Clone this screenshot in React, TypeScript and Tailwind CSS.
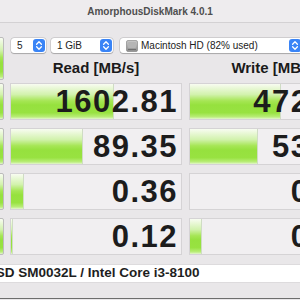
import React from 'react';

type Row = { read: string; readBar: number; write: string; writeBar: number };

const rows: Row[] = [
  { read: '1602.81', readBar: 103, write: '472.14', writeBar: 91 },
  { read: '89.35', readBar: 72, write: '53.86', writeBar: 68 },
  { read: '0.36', readBar: 13, write: '0.62', writeBar: 0 },
  { read: '0.12', readBar: 2, write: '0.53', writeBar: 12 },
];

const green =
  'bg-[linear-gradient(to_bottom,#f8fcf1_0%,#d2f2ad_30%,#a6e655_48%,#96e13e_60%,#98e241_82%,#b9ed78_94%,#e4f6cf_100%)]';

const Stepper = () => (
  <div className="w-[12px] h-[13px] rounded-[3px] bg-[#3a84f6] flex items-center justify-center shrink-0">
    <svg width="12" height="13" viewBox="0 0 12 13">
      <path d="M3.6 5.2 L6 2.8 L8.4 5.2" fill="none" stroke="white" strokeWidth="1.3" strokeLinecap="round" strokeLinejoin="round" />
      <path d="M3.6 7.8 L6 10.2 L8.4 7.8" fill="none" stroke="white" strokeWidth="1.3" strokeLinecap="round" strokeLinejoin="round" />
    </svg>
  </div>
);

const DiskIcon = () => (
  <svg width="12" height="12" viewBox="0 0 12 12" className="shrink-0">
    <defs>
      <linearGradient id="hd" x1="0" y1="0" x2="0" y2="1">
        <stop offset="0" stopColor="#c9c9c9" />
        <stop offset="1" stopColor="#8d8d8d" />
      </linearGradient>
    </defs>
    <rect x="0.5" y="0.5" width="11" height="11" rx="1.5" fill="url(#hd)" stroke="#7c7c7c" strokeWidth="0.6" />
    <rect x="2" y="2" width="8" height="6" rx="1" fill="#b5b5b5" />
    <rect x="2" y="9" width="8" height="1" fill="#6f6f6f" />
  </svg>
);

const Popup = ({ width, children }: { width: string; children: React.ReactNode }) => (
  <div
    className={`${width} h-[15px] bg-white rounded-[3px] shadow-[0_0_0_0.5px_rgba(0,0,0,0.18),0_0.5px_1px_rgba(0,0,0,0.2)] flex items-center justify-between pl-[6px] pr-[1px] shrink-0`}
  >
    <div className="flex items-center gap-[3px] text-[10px] text-[#222] leading-none">{children}</div>
    <Stepper />
  </div>
);

const Cell = ({ value, bar }: { value: string; bar: number }) => (
  <div className="relative w-[172px] h-[37px] border border-[#d5d3d5] bg-[#f1eff1] shrink-0">
    {bar > 0 && (
      <div className={`absolute left-0 top-0 bottom-0 ${green} border-r border-[#cfdcc4]`} style={{ width: bar }} />
    )}
    <div className="relative h-full flex items-center justify-end pr-[3px] text-[31px] font-bold tracking-[1.5px] text-[#1c1c1c] leading-none">
      {value}
    </div>
  </div>
);

export default function App() {
  return (
    <div className="w-[300px] h-[300px] overflow-hidden bg-[#e9e7e9] flex flex-col font-['Liberation_Sans',Arial,sans-serif]">
      {/* title bar */}
      <div className="h-[23px] shrink-0 bg-[#eeecee] border-b border-[#d3d1d3] flex items-center justify-center text-[10px] font-bold text-[#4f4f4f]">
        AmorphousDiskMark 4.0.1
      </div>

      <div className="flex pt-[14px] shrink-0">
        {/* left buttons, mostly off screen */}
        <div className="-ml-[50px] w-[54px] shrink-0 flex flex-col">
          <div className={`h-[43px] border border-[#bcbcbc] rounded-[2px] ${green}`} />
          <div className="mt-[3px] flex flex-col gap-[8px]">
            {rows.map((_, i) => (
              <div key={i} className={`h-[37px] border border-[#bcbcbc] rounded-[2px] ${green}`} />
            ))}
          </div>
        </div>

        <div className="ml-[6px] shrink-0 flex flex-col">
          <div className="mt-[1px] pl-[1px] flex">
            <Popup width="w-[35px]">5</Popup>
            <div className="ml-[5px]">
              <Popup width="w-[62px]">1 GiB</Popup>
            </div>
            <div className="ml-[7px]">
              <Popup width="w-[182px]">
                <DiskIcon />
                <span>Macintosh HD (82% used)</span>
              </Popup>
            </div>
          </div>

          <div className="h-[30px] grid grid-cols-[172px_172px] gap-x-[7px] items-center text-[15px] font-bold text-[#1a1a1a]">
            <div className="text-center">Read [MB/s]</div>
            <div className="text-center">Write [MB/s]</div>
          </div>

          <div className="flex flex-col gap-[8px]">
            {rows.map((r, i) => (
              <div key={i} className="flex gap-[7px]">
                <Cell value={r.read} bar={r.readBar} />
                <Cell value={r.write} bar={r.writeBar} />
              </div>
            ))}
          </div>
        </div>
      </div>

      {/* comment field */}
      <div className="mt-[9px] h-[19px] shrink-0 bg-white border-y border-[#dddbdd] flex items-center overflow-hidden">
        <span className="-ml-[62px] whitespace-nowrap text-[13.5px] font-bold text-[#1e1e1e]">
          APPLE SSD SM0032L / Intel Core i3-8100
        </span>
      </div>

      <div className="flex-1" />
      <div className="h-[1px] bg-[#6d6d6d] shrink-0" />
      <div className="h-[1px] shrink-0" />
    </div>
  );
}
